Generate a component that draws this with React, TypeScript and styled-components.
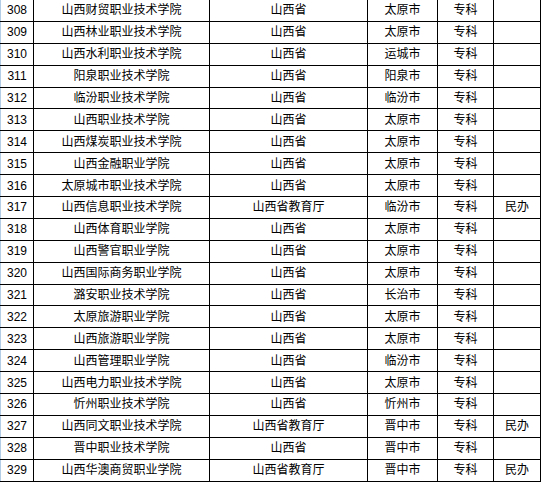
import styled, { createGlobalStyle } from "styled-components";

type School = {
  no: number;
  name: string;
  dept: string;
  city: string;
  level: string;
  note?: string;
};

const EDU = "山西省教育厅";

const schools: School[] = [
  { no: 308, name: "山西财贸职业技术学院", dept: "山西省", city: "太原市", level: "专科" },
  { no: 309, name: "山西林业职业技术学院", dept: "山西省", city: "太原市", level: "专科" },
  { no: 310, name: "山西水利职业技术学院", dept: "山西省", city: "运城市", level: "专科" },
  { no: 311, name: "阳泉职业技术学院", dept: "山西省", city: "阳泉市", level: "专科" },
  { no: 312, name: "临汾职业技术学院", dept: "山西省", city: "临汾市", level: "专科" },
  { no: 313, name: "山西职业技术学院", dept: "山西省", city: "太原市", level: "专科" },
  { no: 314, name: "山西煤炭职业技术学院", dept: "山西省", city: "太原市", level: "专科" },
  { no: 315, name: "山西金融职业学院", dept: "山西省", city: "太原市", level: "专科" },
  { no: 316, name: "太原城市职业技术学院", dept: "山西省", city: "太原市", level: "专科" },
  { no: 317, name: "山西信息职业技术学院", dept: EDU, city: "临汾市", level: "专科", note: "民办" },
  { no: 318, name: "山西体育职业学院", dept: "山西省", city: "太原市", level: "专科" },
  { no: 319, name: "山西警官职业学院", dept: "山西省", city: "太原市", level: "专科" },
  { no: 320, name: "山西国际商务职业学院", dept: "山西省", city: "太原市", level: "专科" },
  { no: 321, name: "潞安职业技术学院", dept: "山西省", city: "长治市", level: "专科" },
  { no: 322, name: "太原旅游职业学院", dept: "山西省", city: "太原市", level: "专科" },
  { no: 323, name: "山西旅游职业学院", dept: "山西省", city: "太原市", level: "专科" },
  { no: 324, name: "山西管理职业学院", dept: "山西省", city: "临汾市", level: "专科" },
  { no: 325, name: "山西电力职业技术学院", dept: "山西省", city: "太原市", level: "专科" },
  { no: 326, name: "忻州职业技术学院", dept: "山西省", city: "忻州市", level: "专科" },
  { no: 327, name: "山西同文职业技术学院", dept: EDU, city: "晋中市", level: "专科", note: "民办" },
  { no: 328, name: "晋中职业技术学院", dept: "山西省", city: "晋中市", level: "专科" },
  { no: 329, name: "山西华澳商贸职业学院", dept: EDU, city: "晋中市", level: "专科", note: "民办" },
];

const widths = [33, 176, 158, 70, 56, 47];

export default function App() {
  return (
    <>
      <GlobalStyle />
      <Table>
        <colgroup>
          {widths.map((w, i) => (
            <col key={i} style={{ width: w }} />
          ))}
        </colgroup>
        <tbody>
          {schools.map((s) => (
            <Row key={s.no}>
              <NoCell>{s.no}</NoCell>
              <Cell>{s.name}</Cell>
              <Cell>{s.dept}</Cell>
              <Cell>{s.city}</Cell>
              <Cell>{s.level}</Cell>
              <Cell>{s.note ?? ""}</Cell>
            </Row>
          ))}
        </tbody>
      </Table>
    </>
  );
}

const GlobalStyle = createGlobalStyle`
  html, body {
    margin: 0;
    padding: 0;
    background: #fff;
  }
  body {
    font-family: "Liberation Sans", "Noto Sans CJK SC", sans-serif;
    color: #000;
  }
`;

const Table = styled.table`
  table-layout: fixed;
  width: 540px;
  border-collapse: collapse;
  margin-top: -1px;
`;

const Row = styled.tr`
  height: 21.9px;
`;

const Cell = styled.td`
  padding: 0;
  border: 1px solid #000;
  text-align: center;
  vertical-align: middle;
  font-size: 12px;
  line-height: 14px;
  white-space: nowrap;
  overflow: hidden;
`;

const NoCell = styled(Cell)`
  border-left: 1px solid #b4cde6;
`;
